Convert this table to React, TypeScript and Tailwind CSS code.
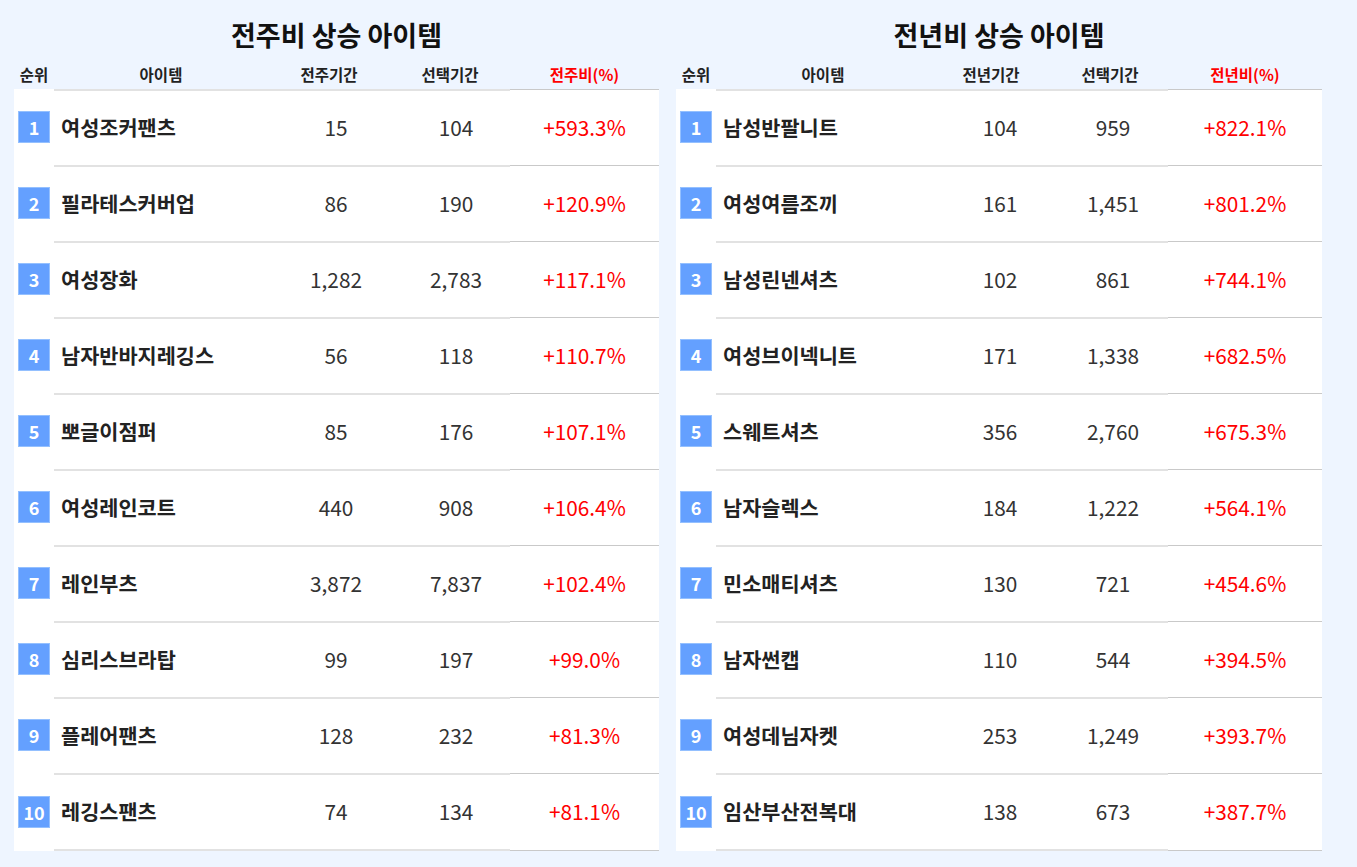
import React from "react";

type Row = [string, string, string, string];

const weekly: Row[] = [
  ["여성조커팬츠", "15", "104", "+593.3%"],
  ["필라테스커버업", "86", "190", "+120.9%"],
  ["여성장화", "1,282", "2,783", "+117.1%"],
  ["남자반바지레깅스", "56", "118", "+110.7%"],
  ["뽀글이점퍼", "85", "176", "+107.1%"],
  ["여성레인코트", "440", "908", "+106.4%"],
  ["레인부츠", "3,872", "7,837", "+102.4%"],
  ["심리스브라탑", "99", "197", "+99.0%"],
  ["플레어팬츠", "128", "232", "+81.3%"],
  ["레깅스팬츠", "74", "134", "+81.1%"],
];

const yearly: Row[] = [
  ["남성반팔니트", "104", "959", "+822.1%"],
  ["여성여름조끼", "161", "1,451", "+801.2%"],
  ["남성린넨셔츠", "102", "861", "+744.1%"],
  ["여성브이넥니트", "171", "1,338", "+682.5%"],
  ["스웨트셔츠", "356", "2,760", "+675.3%"],
  ["남자슬렉스", "184", "1,222", "+564.1%"],
  ["민소매티셔츠", "130", "721", "+454.6%"],
  ["남자썬캡", "110", "544", "+394.5%"],
  ["여성데님자켓", "253", "1,249", "+393.7%"],
  ["임산부산전복대", "138", "673", "+387.7%"],
];

function Table({
  title,
  cols,
  rows,
  width,
  headGrid,
  bodyGrid,
}: {
  title: string;
  cols: [string, string, string];
  rows: Row[];
  width: string;
  headGrid: string;
  bodyGrid: string;
}) {
  return (
    <div className={`${width} flex flex-col`}>
      <div className="h-[60px] pt-[19px] text-center text-[27px] leading-[32px] font-bold text-[#111]">
        {title}
      </div>
      <div className={`grid ${headGrid} h-[29px] items-center text-[15.5px] font-bold text-[#222] leading-none`}>
        <div className="text-center">순위</div>
        <div className="text-center">아이템</div>
        <div className="text-center">{cols[0]}</div>
        <div className="text-center">{cols[1]}</div>
        <div className="text-center text-[#ff0000]">{cols[2]}</div>
      </div>
      <div className="bg-white flex flex-col">
        {rows.map((r, i) => {
          const last = i === rows.length - 1;
          const lb = `border-t-2 border-[#e2e2e2] ${last ? "border-b-2" : ""}`;
          const db = `border-t border-[#c9c9c9] ${last ? "border-b" : ""}`;
          return (
            <div key={i} className={`grid ${bodyGrid} ${last ? "h-[78px]" : "h-[76px]"}`}>
              <div className="flex items-center justify-center">
                <div className="w-8 h-8 bg-[#64a0ff] border border-[#94c0ff] flex items-center justify-center text-white font-bold text-[18px] leading-none">
                  {i + 1}
                </div>
              </div>
              <div className={`${lb} flex items-center pl-[7px] text-[20.8px] font-bold text-[#222]`}>
                {r[0]}
              </div>
              <div className={`${lb} flex items-center justify-center text-[20.8px] text-[#333]`}>
                {r[1]}
              </div>
              <div className={`${lb} flex items-center justify-center text-[20.8px] text-[#333]`}>
                {r[2]}
              </div>
              <div className={`${db} flex items-center justify-center text-[20.8px] text-[#ff0000]`}>
                {r[3]}
              </div>
            </div>
          );
        })}
      </div>
    </div>
  );
}

export default function App() {
  return (
    <div
      className="min-h-screen w-full bg-[#eef5ff] flex gap-[17px] pl-[14px]"
      style={{ fontFamily: '"Noto Sans CJK KR", "Noto Sans", sans-serif' }}
    >
      <Table
        title="전주비 상승 아이템"
        cols={["전주기간", "선택기간", "전주비(%)"]}
        rows={weekly}
        width="w-[645px]"
        headGrid="grid-cols-[40px_214px_122px_120px_149px]"
        bodyGrid="grid-cols-[40px_216px_132px_108px_149px]"
      />
      <Table
        title="전년비 상승 아이템"
        cols={["전년기간", "선택기간", "전년비(%)"]}
        rows={yearly}
        width="w-[646px]"
        headGrid="grid-cols-[40px_214px_122px_116px_154px]"
        bodyGrid="grid-cols-[40px_226px_116px_110px_154px]"
      />
    </div>
  );
}
